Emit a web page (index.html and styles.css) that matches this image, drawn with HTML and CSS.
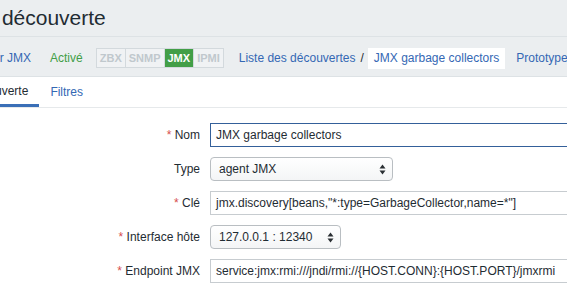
FILE: index.html
```
<!DOCTYPE html>
<html lang="fr">
<head>
    <meta charset="UTF-8">
    <meta name="viewport" content="width=device-width, initial-scale=1.0">
    <title>Règle de découverte</title>
    <link rel="stylesheet" href="styles.css">
</head>
<body>
    <header class="page-header">
        <h1>Règle de découverte</h1>
    </header>

    <nav class="host-nav">
        <a href="#" class="nav-link host-link">Zabbix server JMX</a>
        <span class="status-on">Activé</span>
        <span class="avail">
            <span class="avail-item">ZBX</span>
            <span class="avail-item">SNMP</span>
            <span class="avail-item avail-ok">JMX</span>
            <span class="avail-item">IPMI</span>
        </span>
        <a href="#" class="nav-link crumb-list">Liste des découvertes</a>
        <span class="crumb-sep">/</span>
        <span class="crumb-current">JMX garbage collectors</span>
        <a href="#" class="nav-link crumb-next">Prototypes d'éléments</a>
    </nav>

    <ul class="tabs">
        <li class="tab tab-active">Découverte</li>
        <li class="tab"><a href="#">Filtres</a></li>
    </ul>

    <form class="form">
        <div class="form-row">
            <label class="form-label"><span class="req">*</span> Nom</label>
            <div class="field field-text field-focus">JMX garbage collectors</div>
        </div>
        <div class="form-row">
            <label class="form-label">Type</label>
            <div class="field field-select select-type">
                <span>agent JMX</span>
                <svg class="select-arrow" width="7" height="11" viewBox="0 0 7 11"><path d="M3.5 0.5 L6.5 4.5 L0.5 4.5 Z M0.5 6.5 L6.5 6.5 L3.5 10.5 Z" fill="#2a2f33"/></svg>
            </div>
        </div>
        <div class="form-row">
            <label class="form-label"><span class="req">*</span> Clé</label>
            <div class="field field-text">jmx.discovery[beans,"*:type=GarbageCollector,name=*"]</div>
        </div>
        <div class="form-row">
            <label class="form-label"><span class="req">*</span> Interface hôte</label>
            <div class="field field-select select-iface">
                <span>127.0.0.1 : 12340</span>
                <svg class="select-arrow" width="7" height="11" viewBox="0 0 7 11"><path d="M3.5 0.5 L6.5 4.5 L0.5 4.5 Z M0.5 6.5 L6.5 6.5 L3.5 10.5 Z" fill="#2a2f33"/></svg>
            </div>
        </div>
        <div class="form-row">
            <label class="form-label"><span class="req">*</span> Endpoint JMX</label>
            <div class="field field-text">service:jmx:rmi:///jndi/rmi://{HOST.CONN}:{HOST.PORT}/jmxrmi</div>
        </div>
    </form>
</body>
</html>
```

FILE: styles.css
```
body {
    margin: 0;
    font-family: "Liberation Sans", Arial, sans-serif;
    font-size: 12px;
    color: #1f2c33;
    background-color: #fff;
    overflow: hidden;
}
a {
    color: #3468b4;
    text-decoration: none;
}
.page-header {
    background-color: #ebeef0;
    height: 36px;
    border-bottom: 1px solid #dde2e5;
    white-space: nowrap;
}
h1 {
    margin: 0 0 0 -88px;
    padding-top: 6px;
    font-size: 21px;
    font-weight: normal;
    line-height: 24px;
    color: #1f2c33;
}
.host-nav {
    background-color: #ebeef0;
    height: 36px;
    padding-top: 3px;
    border-bottom: 1px solid #dde2e5;
    display: flex;
    align-items: center;
    white-space: nowrap;
    margin-left: -69px;
}
.host-link {
    margin-right: 19px;
}
.status-on {
    color: #429e47;
    margin-right: 13px;
}
.avail {
    display: flex;
    border: 1px solid #d3d9dd;
    background-color: #f0f2f4;
    margin-right: 15px;
}
.avail-item {
    font-size: 11px;
    font-weight: bold;
    color: #c0c8cd;
    padding: 0 3px;
    line-height: 18px;
    border-left: 1px solid #d3d9dd;
}
.avail-item:first-child {
    border-left: none;
}
.avail-ok {
    background-color: #429e47;
    color: #fff;
}
.crumb-sep {
    margin: 0 4px 0 5px;
}
.crumb-current {
    background-color: #fff;
    color: #3468b4;
    padding: 0 6px;
    line-height: 21px;
    margin-right: 11px;
}
.tabs {
    list-style: none;
    margin: 0 0 0 -44px;
    padding: 0;
    display: flex;
    height: 30px;
    border-bottom: 1px solid #e6e9eb;
}
.tab {
    padding: 0 11px;
    line-height: 30px;
}
.tab-active {
    border-bottom: 3px solid #3a6fb7;
    line-height: 29px;
}
.form {
    padding-top: 15px;
    display: flex;
    flex-direction: column;
    gap: 10px;
}
.form-row {
    display: flex;
    align-items: center;
    gap: 10px;
    white-space: nowrap;
}
.form-label {
    width: 200px;
    flex-shrink: 0;
    text-align: right;
}
.req {
    color: #d64e4e;
}
.field {
    box-sizing: border-box;
    height: 24px;
    display: flex;
    align-items: center;
    flex-shrink: 0;
}
.field-text {
    width: 453px;
    border: 1px solid #c7ccd0;
    padding: 0 5px;
}
.field-focus {
    border-color: #34609a;
}
.field-select {
    border: 1px solid #b9bec2;
    border-radius: 4px;
    background: linear-gradient(#fff, #f4f5f6);
    padding: 0 6px 0 8px;
    justify-content: space-between;
}
.select-type {
    width: 183px;
}
.select-iface {
    width: 131px;
}
```
